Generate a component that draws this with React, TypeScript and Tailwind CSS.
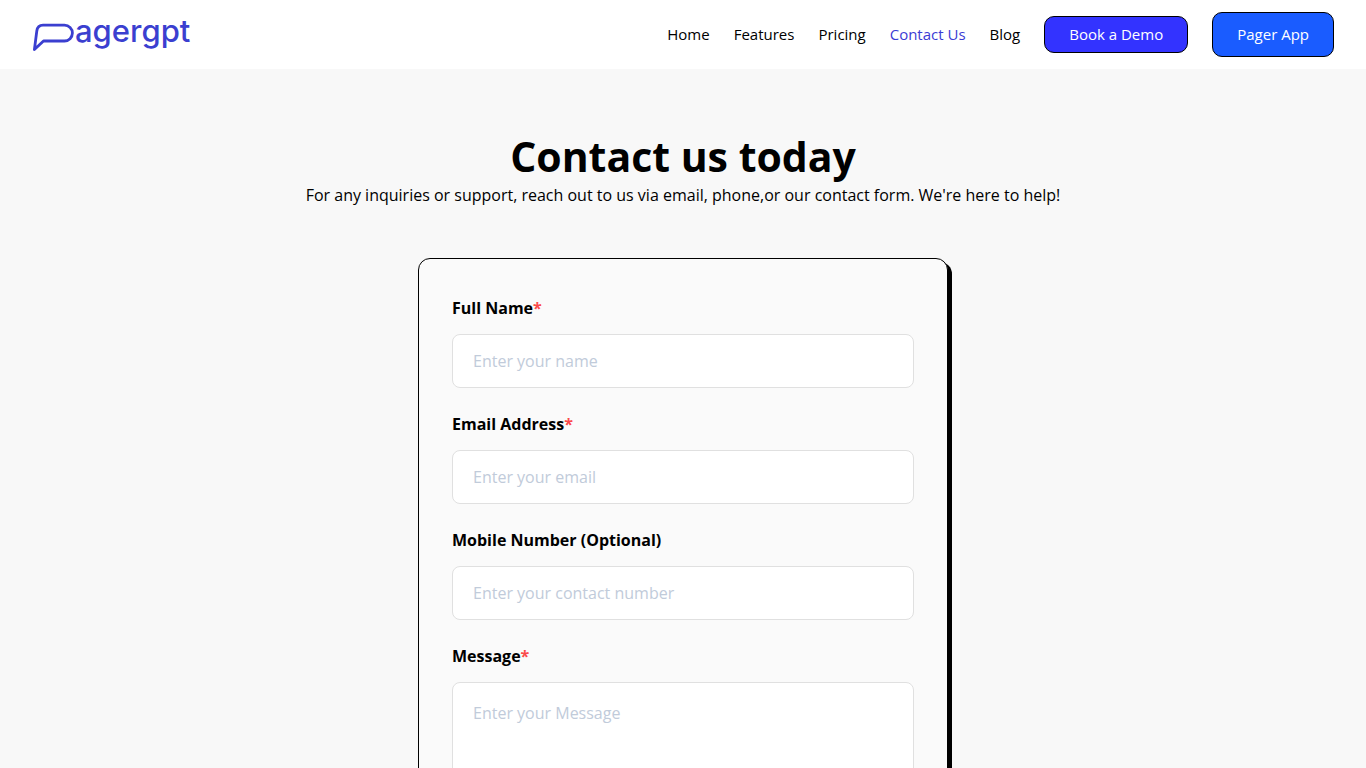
import { useState } from 'react';

const navLinks = [
  { name: 'Home', href: '/' },
  { name: 'Features', href: '/features' },
  { name: 'Pricing', href: '/pricing' },
  { name: 'Contact Us', href: '/contact' },
  { name: 'Blog', href: '/blog' },
];

const fields = [
  {
    id: 'name',
    label: 'Full Name',
    type: 'text',
    placeholder: 'Enter your name',
    required: true,
  },
  {
    id: 'email',
    label: 'Email Address',
    type: 'email',
    placeholder: 'Enter your email',
    required: true,
  },
  {
    id: 'phone',
    label: 'Mobile Number (Optional)',
    type: 'tel',
    placeholder: 'Enter your contact number',
    required: false,
  },
];

// the speech bubble stands in for the "p"
const Logo = () => (
  <a
    href="/"
    aria-label="pagergpt"
    className="flex items-start text-[#3b3fd0]"
  >
    <svg width="43" height="44" viewBox="0 0 43 44" fill="none">
      <path
        d="M2.4 36.6 L4.8 18 Q5.6 12.2 11 12.2 H32.5 A7.9 7.9 0 0 1 32.5 28 H11.5 Z"
        stroke="currentColor"
        strokeWidth="2.8"
        strokeLinejoin="round"
      />
    </svg>
    <span className="font-['Inter',sans-serif] text-[31px] leading-9 font-medium">
      agergpt
    </span>
  </a>
);

const Header = () => (
  <header className="bg-white px-8 py-3 flex items-center justify-between">
    <Logo />
    <nav className="flex items-center gap-6 text-[15px]">
      {navLinks.map((link) => (
        <a
          key={link.name}
          href={link.href}
          className={link.name === 'Contact Us' ? 'text-[#3b3bd4]' : ''}
        >
          {link.name}
        </a>
      ))}
      <button className="h-[37px] px-6 rounded-[10px] border border-black bg-[#3333ff] text-white">
        Book a Demo
      </button>
      <button className="h-[45px] px-6 rounded-[10px] border border-black bg-[#1a5cff] text-white">
        Pager App
      </button>
    </nav>
  </header>
);

const App = () => {
  const [values, setValues] = useState<Record<string, string>>({});

  const handleChange = (id: string, value: string) => {
    setValues({ ...values, [id]: value });
  };

  return (
    <div className="min-h-screen bg-[#f8f8f8] text-black font-['Open_Sans',sans-serif]">
      <Header />
      <main className="px-4 pt-16 pb-16 flex flex-col items-center">
        <h1 className="text-[41px] leading-[47px] font-bold text-center">
          Contact us today
        </h1>
        <p className="text-base leading-[30px] text-center">
          For any inquiries or support, reach out to us via email, phone,or our
          contact form. We&apos;re here to help!
        </p>

        <form
          className="w-full max-w-[530px] mt-12 px-[33px] py-[37px] flex flex-col gap-6 rounded-xl border border-black bg-[#fafafa] shadow-[4px_4px_0_0_#000]"
          onSubmit={(e) => e.preventDefault()}
        >
          {fields.map((field) => (
            <div key={field.id} className="flex flex-col gap-[14px]">
              <label htmlFor={field.id} className="text-base font-bold">
                {field.label}
                {field.required && <span className="text-[#fa4a4a]">*</span>}
              </label>
              <input
                id={field.id}
                type={field.type}
                placeholder={field.placeholder}
                value={values[field.id] || ''}
                onChange={(e) => handleChange(field.id, e.target.value)}
                className="h-[54px] px-5 rounded-lg border border-[#e0e0e0] bg-white text-base placeholder:text-[#c1cbda]"
              />
            </div>
          ))}
          <div className="flex flex-col gap-[14px]">
            <label htmlFor="message" className="text-base font-bold">
              Message<span className="text-[#fa4a4a]">*</span>
            </label>
            <textarea
              id="message"
              rows={6}
              placeholder="Enter your Message"
              value={values.message || ''}
              onChange={(e) => handleChange('message', e.target.value)}
              className="px-5 py-[18px] rounded-lg border border-[#e0e0e0] bg-white text-base resize-none placeholder:text-[#c1cbda]"
            />
          </div>
        </form>
      </main>
    </div>
  );
};

export default App;
